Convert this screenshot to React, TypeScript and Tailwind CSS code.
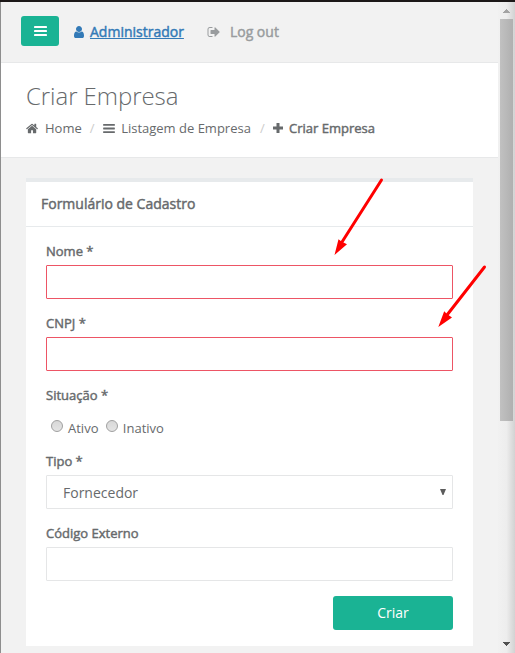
import React from "react";

const HOME =
  "M1408 992v480q0 26-19 45t-45 19h-384v-384h-256v384h-384q-26 0-45-19t-19-45v-480q0-1 .5-3t.5-3l575-474 575 474q1 2 1 6zm223-69l-62 74q-8 9-21 11h-3q-13 0-21-7l-692-577-692 577q-12 8-24 7-13-2-21-11l-62-74q-8-10-7-23.5t11-21.5l719-599q32-26 76-26t76 26l244 204v-195q0-14 9-23t23-9h192q14 0 23 9t9 23v408l219 182q10 8 11 21.5t-7 23.5z";
const USER =
  "M1536 1399q0 109-62.5 187t-150.5 78h-854q-88 0-150.5-78t-62.5-187q0-85 8.5-160.5t31.5-152 58.5-131 94-89 134.5-34.5q131 128 313 128t313-128q76 0 134.5 34.5t94 89 58.5 131 31.5 152 8.5 160.5zm-256-887q0 159-112.5 271.5t-271.5 112.5-271.5-112.5-112.5-271.5 112.5-271.5 271.5-112.5 271.5 112.5 112.5 271.5z";
const SIGN_OUT =
  "M704 1440q0 4 1 20t.5 26.5-3 23.5-10 19.5-20.5 6.5h-320q-119 0-203.5-84.5t-84.5-203.5v-704q0-119 84.5-203.5t203.5-84.5h320q13 0 22.5 9.5t9.5 22.5q0 4 1 20t.5 26.5-3 23.5-10 19.5-20.5 6.5h-320q-66 0-113 47t-47 113v704q0 66 47 113t113 47h312l11.5 1 11.5 3 8 5.500 7 9 2 13.500zm928-544q0 26-19 45l-544 544q-19 19-45 19t-45-19-19-45v-288h-448q-26 0-45-19t-19-45v-384q0-26 19-45t45-19h448v-288q0-26 19-45t45-19 45 19l544 544q19 19 19 45z";

function Glyph({ d, className }: { d: string; className: string }) {
  return (
    <svg viewBox="0 0 1792 1792" fill="currentColor" className={`shrink-0 ${className}`}>
      <path d={d} />
    </svg>
  );
}

function Bars({ className }: { className: string }) {
  return (
    <svg viewBox="0 0 13 10" fill="currentColor" className={`shrink-0 ${className}`}>
      <rect width="13" height="2" rx="0.4" />
      <rect y="4" width="13" height="2" rx="0.4" />
      <rect y="8" width="13" height="2" rx="0.4" />
    </svg>
  );
}

function Label({ children }: { children: React.ReactNode }) {
  return (
    <label className="mb-[5px] block h-[18px] leading-[18px] [-webkit-text-stroke:0.45px_#676a6c]">
      {children}
    </label>
  );
}

function TextField({ label, invalid }: { label: string; invalid?: boolean }) {
  return (
    <div className="mb-[15px]">
      <Label>{label}</Label>
      <input
        type="text"
        className={`block h-[34px] w-full rounded-[1px] border bg-white px-3 text-sm outline-none ${
          invalid ? "border-[#ed5565]" : "border-[#e5e6e7]"
        }`}
      />
    </div>
  );
}

function Radio({ label }: { label: string }) {
  return (
    <label className="flex items-center">
      <input
        type="radio"
        name="situacao"
        className="mr-[5px] mb-[5px] size-3 appearance-none rounded-full border border-[#a0a0a0] bg-gradient-to-b from-[#d8d8d8] to-[#e4e4e4]"
      />
      {label}
    </label>
  );
}

function Scrollbar() {
  return (
    <div className="flex w-[17px] shrink-0 flex-col bg-gradient-to-r from-[#f1f1f1] via-[#ededed] to-[#d2d2d2] pl-[2px]">
      <div className="flex h-[17px] w-[13px] items-center justify-center">
        <svg viewBox="0 0 7 4" className="h-1 w-[7px]" fill="#a3a3a3" shapeRendering="crispEdges">
          <path d="M3 0h1v1h1v1h1v1h1v1H0V3h1V2h1V1h1z" />
        </svg>
      </div>
      <div className="h-[402px] w-[13px] bg-gradient-to-r from-[#c1c1c1] to-[#b0b0b0]" />
      <div className="mt-auto flex h-[11px] w-[13px] justify-center">
        <svg viewBox="0 0 7 4" className="h-1 w-[7px]" fill="#505050" shapeRendering="crispEdges">
          <path d="M0 0h7v1H6v1H5v1H4v1H3V3H2V2H1V1H0z" />
        </svg>
      </div>
    </div>
  );
}

export default function App() {
  return (
    <div className="relative flex h-[653px] w-[515px] flex-col overflow-hidden bg-[#f3f3f4] font-['Open_Sans','Noto_Sans',sans-serif] text-[13px] text-[#676a6c]">
      <div className="h-[2px] shrink-0 bg-[#1c1818]" />
      <div className="flex min-h-0 flex-1 border-l border-[#8e8e8e]">
        <main className="flex w-[497px] flex-col bg-[#f2f2f2]">
          <nav className="flex h-[61px] shrink-0 items-center border-b border-[#e7e8e9] pl-5 text-sm">
            <button className="mb-[2px] flex h-[30px] w-[38px] items-center justify-center rounded-[3px] bg-[#1ab394] text-white">
              <Bars className="h-[10px] w-[13px]" />
            </button>
            <a className="ml-[13px] flex items-center text-[#337ab7]">
              <Glyph d={USER} className="mr-1 size-[14px]" />
              <span className="underline [-webkit-text-stroke:0.45px_#337ab7]">Administrador</span>
            </a>
            <a className="ml-[23px] flex items-center text-[#999c9e]">
              <Glyph d={SIGN_OUT} className="mr-[9px] size-[14px]" />
              <span className="[-webkit-text-stroke:0.45px_#999c9e]">Log out</span>
            </a>
          </nav>
          <header className="h-[95px] shrink-0 border-b border-[#e7e8e9] bg-white pl-[25px]">
            <h2 className="mt-5 h-[26px] text-2xl leading-[26px] font-light tracking-[-0.06px]">Criar Empresa</h2>
            <ol className="mt-[10px] flex h-[18px] items-center leading-[18px]">
              <li className="flex items-center">
                <Glyph d={HOME} className="mr-[6px] size-[13px]" />
                Home
              </li>
              <li className="mx-2 text-[#cccccc]">/</li>
              <li className="flex items-center">
                <Bars className="mr-[6.6px] h-[9px] w-3" />
                Listagem de Empresa
              </li>
              <li className="mr-2 ml-[9px] text-[#cccccc]">/</li>
              <li className="flex items-center [-webkit-text-stroke:0.45px_#676a6c]">
                <svg viewBox="0 0 10 10" className="mr-[6.4px] size-[10px]" fill="currentColor" stroke="none">
                  <path d="M3.500 0h3v3.500H10v3H6.500V10h-3V6.500H0v-3h3.500z" />
                </svg>
                Criar Empresa
              </li>
            </ol>
          </header>
          <section className="mt-5 ml-[25px] h-[468px] w-[447px] shrink-0 border-t-4 border-[#e7eaec] bg-white">
            <h5 className="flex h-[45px] items-center border-b border-[#e7eaec] pl-[15px] text-sm [-webkit-text-stroke:0.45px_#676a6c]">
              Formulário de Cadastro
            </h5>
            <form className="px-5 pt-[15px]">
              <TextField label="Nome *" invalid />
              <TextField label="CNPJ *" invalid />
              <div className="mb-[15px]">
                <Label>Situação *</Label>
                <div className="flex h-7 items-end gap-[7.4px] pl-[5px] leading-[18px]">
                  <Radio label="Ativo" />
                  <Radio label="Inativo" />
                </div>
              </div>
              <div className="mb-[15px]">
                <Label>Tipo *</Label>
                <div className="flex h-[34px] items-center justify-between rounded-[1px] border border-[#e5e6e7] pr-[6px] pl-4 text-sm">
                  <span className="pt-[2px]">Fornecedor</span>
                  <svg viewBox="0 0 6 6" className="mb-[1px] size-[6px]" fill="#5c5c5c">
                    <path d="M0 0h6L3.500 6h-1z" />
                  </svg>
                </div>
              </div>
              <TextField label="Código Externo" />
              <div className="flex justify-end">
                <button
                  type="button"
                  className="h-[34px] w-[120px] rounded-[3px] bg-[#1ab394] text-sm text-white"
                >
                  Criar
                </button>
              </div>
            </form>
          </section>
        </main>
        <Scrollbar />
      </div>
      <svg
        viewBox="0 0 515 653"
        className="pointer-events-none absolute inset-0 h-[653px] w-[515px]"
        fill="#ff0000"
        stroke="#ff0000"
        strokeLinecap="round"
      >
        <path d="M381.500 180L342 242" strokeWidth="3" />
        <path d="M334.500 255L338.500 239.300L341.500 241.500L347 244.300z" stroke="none" />
        <path d="M484.500 267L447 315" strokeWidth="3" />
        <path d="M438.300 327L444.200 311.300L447 314L452 317.500z" stroke="none" />
      </svg>
    </div>
  );
}
